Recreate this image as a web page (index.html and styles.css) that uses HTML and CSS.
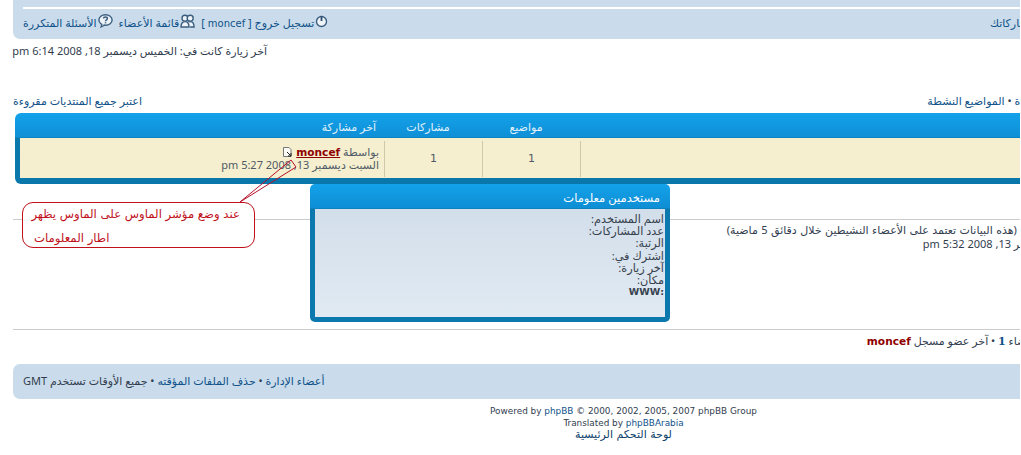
FILE: index.html
```html
<!DOCTYPE html>
<html lang="ar">
<head>
<meta charset="utf-8">
<title>لوحة التحكم</title>
<link rel="stylesheet" href="styles.css">
</head>
<body>
<div class="page">
  <div class="sheet">
    <header class="bar nav">
      <div class="nav-rule"></div>
      <div class="bar-row">
        <div class="nav-links">
          <a class="nav-link"><svg class="ic" viewBox="0 0 14 14"><circle cx="7" cy="7.500" r="5.400" fill="#eef3f8" stroke="#3b5e80" stroke-width="1.500"/><path d="M7 1.500v5.500" stroke="#2f5070" stroke-width="2" fill="none"/></svg><span>تسجيل خروج [ <span class="latin">moncef</span> ]</span></a>
          <a class="nav-link"><svg class="ic ic-wide" viewBox="0 0 15 14"><circle cx="5" cy="4.200" r="3" fill="#eef3f8" stroke="#3b5e80" stroke-width="1.400"/><circle cx="10.200" cy="4.200" r="3" fill="#eef3f8" stroke="#3b5e80" stroke-width="1.400"/><path d="M1 13c0-3.400 1.600-5.400 4-5.400s4 2 4 5.400zM8.600 8c.5-.3 1-.4 1.600-.4 2.400 0 3.900 2 3.900 5.400h-4" fill="#eef3f8" stroke="#3b5e80" stroke-width="1.400"/></svg><span>قائمة الأعضاء</span></a>
          <a class="nav-link"><svg class="ic ic-wide" viewBox="0 0 15 14"><ellipse cx="7.500" cy="6" rx="6.600" ry="5.200" fill="#eef3f8" stroke="#3b5e80" stroke-width="1.400"/><path d="M4 10l-1 3 4-2" fill="#eef3f8" stroke="#3b5e80" stroke-width="1.200"/><path d="M5.600 4.600c0-2 3.800-2 3.800 0 0 1.300-1.900 1.200-1.900 2.600" fill="none" stroke="#3b5e80" stroke-width="1.500"/><path d="M7.500 8.200v1.200" stroke="#3b5e80" stroke-width="1.500"/></svg><span>الأسئلة المتكررة</span></a>
        </div>
        <a class="link edge-nav">عرض مشاركاتك</a>
      </div>
    </header>

    <p class="visit">آخر زيارة كانت في: الخميس ديسمبر 18, 2008 6:14 pm</p>

    <div class="actions">
      <a class="link">اعتبر جميع المنتديات مقروءة</a>
      <span class="edge-active"><a class="link">المواضيع غير المقروءة</a> • <a class="link">المواضيع النشطة</a></span>
    </div>

    <section class="forums">
      <div class="forum-grid forum-head">
        <div class="cell-last head-last">آخر مشاركة</div>
        <div class="cell-num head-num">مشاركات</div>
        <div class="cell-num head-num">مواضيع</div>
        <div></div>
      </div>
      <div class="forum-grid forum-row">
        <div class="cell-last">
          <div class="by">بواسطة <a class="author">moncef</a> <svg class="post-ic" viewBox="0 0 11 10"><path d="M1.500.5h5.500l2 2v7h-7.500z" fill="#fbfbf6" stroke="#777"/><path d="M5 5l4 4M9 6v3H6" fill="none" stroke="#222"/></svg></div>
          <div>السبت ديسمبر 13, 2008 5:27 pm</div>
        </div>
        <div class="cell-num num">1</div>
        <div class="cell-num num">1</div>
        <div class="cell-forum"></div>
      </div>
    </section>

    <hr class="rule rule-online">
    <div class="online">
      <p class="edge-online-1">المتواجدون الآن (هذه البيانات تعتمد على الأعضاء النشيطين خلال دقائق 5 ماضية)</p>
      <p class="edge-online-2">الوقت الآن هو ديسمبر 13, 2008 5:32 pm</p>
    </div>

    <hr class="rule rule-stats">
    <p class="stats">مجموع الأعضاء <b class="count">1</b> • آخر عضو مسجل <a class="author-plain">moncef</a></p>

    <footer class="bar foot">
      <div class="foot-text"><a class="link">أعضاء الإدارة</a> • <a class="link">حذف الملفات المؤقته</a> • جميع الأوقات تستخدم GMT</div>
    </footer>

    <div class="credits">
      <div class="ltr-line">Powered by <a class="link">phpBB</a> © 2000, 2002, 2005, 2007 phpBB Group</div>
      <div class="ltr-line">Translated by <a class="link">phpBBArabia</a></div>
      <a class="link panel-link">لوحة التحكم الرئيسية</a>
    </div>
  </div>

  <aside class="popup">
    <div class="popup-title">مستخدمين معلومات</div>
    <div class="popup-body">
      <div>اسم المستخدم:</div>
      <div>عدد المشاركات:</div>
      <div>الرتبة:</div>
      <div>اشترك في:</div>
      <div>آخر زيارة:</div>
      <div>مكان:</div>
      <div class="www">:WWW</div>
    </div>
  </aside>

  <svg class="pointer" viewBox="0 0 60 46"><path d="M2 44L53 2l5 7z" fill="none" stroke="#b5102a"/></svg>
  <div class="note">
    <div class="note-first">عند وضع مؤشر الماوس على الماوس يظهر</div>
    <div class="note-second">اطار المعلومات</div>
  </div>
</div>
</body>
</html>
```

FILE: styles.css
```css
* { box-sizing: border-box; }
html, body { margin: 0; padding: 0; background: #fff; }
body { font-family: "Noto Sans", "DejaVu Sans", sans-serif; font-size: 11px; line-height: 13px; color: #323d4f; }
p { margin: 0; }
.page { position: relative; width: 1020px; height: 455px; overflow: hidden; }
.sheet { width: 1120px; padding-left: 13px; }
.link, .nav-link { color: #105289; }
.latin { direction: ltr; unicode-bidi: isolate; font-family: "DejaVu Sans", sans-serif; font-size: 10px; }

.bar { background: #cadceb; border-radius: 0 0 0 7px; }
.nav { height: 39px; padding: 7px 0 0 10px; }
.nav-rule { height: 2px; background: #fff; }
.bar-row { display: flex; justify-content: space-between; align-items: center; height: 27px; direction: ltr; }
.nav-links { display: flex; gap: 6px; direction: rtl; margin-top: 1px; }
.nav-link { display: flex; align-items: flex-start; gap: 1px; white-space: pre; direction: rtl; }
.ic { width: 13px; height: 14px; flex: none; margin-top: -2px; }
.ic-wide { width: 15px; }
.edge-nav { direction: rtl; padding-right: 56px; }

.visit { direction: rtl; text-align: left; height: 14px; margin-top: 5px; white-space: nowrap; width: 254px; }

.actions { display: flex; justify-content: space-between; direction: ltr; margin-top: 37px; height: 13px; line-height: 12px; }
.actions > * { direction: rtl; }
.edge-active { padding-right: 4px; }

.forums { margin: 5px 0 0 2px; width: 1105px; height: 71px; background: linear-gradient(#13a2ea 0, #0f8fd6 24px, #0b79ae 25px, #0a77ab 100%); border-radius: 6px; padding: 0 0 6px 5px; }
.forum-grid { display: grid; grid-template-columns: 365px 98px 98px 1fr; direction: ltr; }
.forum-head { height: 25px; color: #e4f2fb; align-items: center; padding-top: 1px; }
.forum-row { height: 40px; background: #f5efcf; padding: 3px 0; color: #4f5a66; }
.cell-last { direction: rtl; text-align: right; padding-right: 5px; line-height: 13px; border-right: 1px solid #cfc9aa; }
.forum-head .cell-last, .forum-head .cell-num { border: 0; }
.head-last { padding-right: 9px; }
.cell-num { text-align: center; border-right: 1px solid #cfc9aa; }
.head-num { padding-right: 12px; }
.num { font-family: "DejaVu Sans", sans-serif; font-size: 11px; line-height: 36px; }
.by { margin-top: 4px; height: 13px; }
.author { color: #8f0000; font-family: "DejaVu Sans", sans-serif; font-size: 10.6px; font-weight: bold; text-decoration: underline; direction: ltr; unicode-bidi: isolate; }
.post-ic { width: 11px; height: 10px; vertical-align: -1px; }

.rule { border: 0; height: 1px; background: #ccc; margin: 0; }
.rule-online { margin-top: 35px; }
.online { direction: rtl; height: 109px; padding-top: 3px; line-height: 14px; white-space: nowrap; }
.edge-online-1 { padding-right: 28px; word-spacing: 0.6px; }
.edge-online-2 { padding-right: 7px; }
.stats { direction: rtl; padding: 4px 43px 0 0; height: 34px; line-height: 13px; white-space: nowrap; }
.count { font-family: "DejaVu Serif", serif; color: #105289; font-size: 11px; }
.author-plain { color: #8f0000; font-family: "DejaVu Sans", sans-serif; font-weight: bold; font-size: 10.6px; }

.foot { height: 35px; border-top-left-radius: 7px; padding: 0 0 2px 10px; display: flex; align-items: center; }
.foot-text { direction: rtl; white-space: nowrap; }

.credits { margin-left: -13px; height: 50px; padding-top: 6px; text-align: center; line-height: 12px; width: 1247px; font-family: "DejaVu Sans", sans-serif; font-size: 8.9px; }
.ltr-line { direction: ltr; }
.panel-link { display: block; direction: rtl; color: #0b3f6b; font-size: 11px; }

.popup { position: absolute; left: 310px; top: 184px; width: 360px; height: 138px; border-radius: 5px; background: linear-gradient(#13a2ea 0, #0e8ed4 24px, #0b79ae 25px); padding: 25px 5px 5px; direction: rtl; }
.popup-title { position: absolute; top: 0; right: 0; left: 0; height: 25px; line-height: 28px; padding-right: 10px; color: #fff; font-size: 11.5px; }
.popup-body { height: 108px; background: linear-gradient(#d2deea, #e1eaf3); color: #37424e; font-size: 11.3px; line-height: 12.2px; padding: 4px 1px 0 0; }
.www { font-weight: bold; font-size: 9.5px; font-family: "DejaVu Sans", sans-serif; }

.note { position: absolute; left: 22px; top: 202px; width: 233px; height: 46px; background: #fff; border: 1px solid #c0101a; border-radius: 11px; color: #c0101a; direction: rtl; font-family: "DejaVu Sans", sans-serif; font-size: 11.7px; line-height: 24px; padding: 0 14px 0 11px; white-space: nowrap; }
.note-first { margin-top: -1px; }
.note-second { text-align: left; }
.pointer { position: absolute; left: 238px; top: 158px; width: 60px; height: 46px; }
```
